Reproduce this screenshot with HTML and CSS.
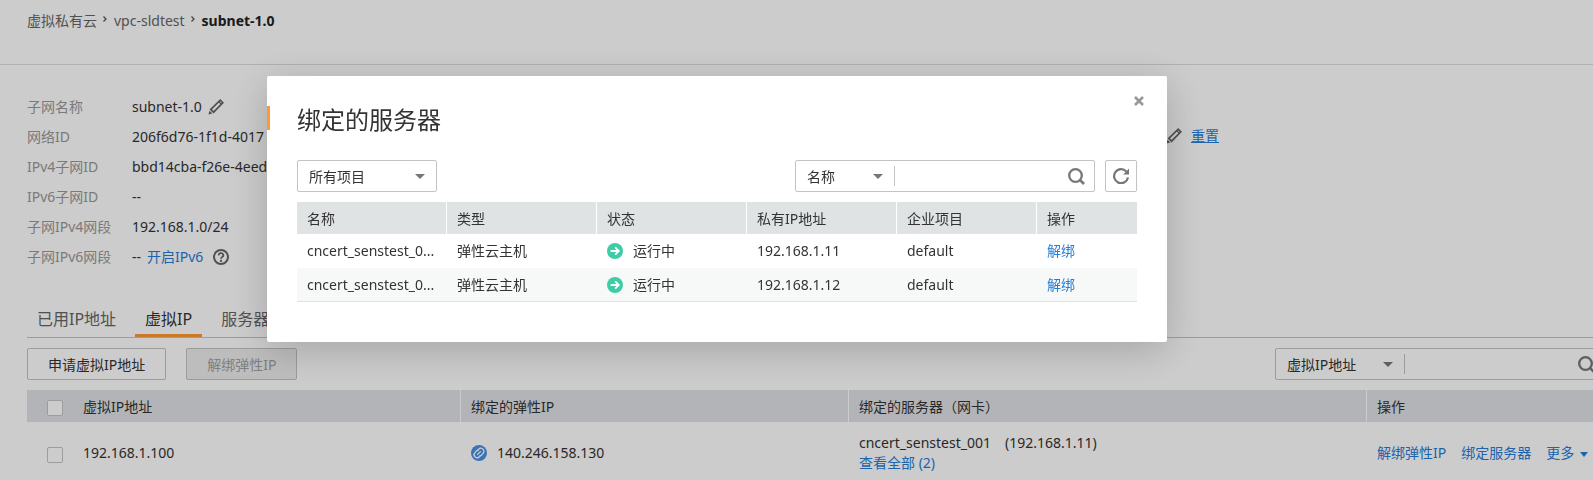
FILE: index.html
```html
<!DOCTYPE html>
<html lang="zh-CN">
<head>
  <meta charset="UTF-8">
  <title>subnet-1.0</title>
  <link rel="stylesheet" href="styles.css">
</head>
<body>
  <svg class="sprite" width="0" height="0">
    <symbol id="pencil" viewBox="0 0 16 16">
      <path d="M0.4 15.6 L1.6 11.8 L4.4 14.6 Z" fill="currentColor"/>
      <path d="M2.8 10.4 L12.2 1.2 L14.8 3.8 L5.6 13.2 Z" fill="none" stroke="currentColor" stroke-width="1.7"/>
      <path d="M10.6 2.6 L13.4 5.4" stroke="currentColor" stroke-width="1.2"/>
    </symbol>
    <symbol id="search" viewBox="0 0 17 17">
      <circle cx="7.5" cy="7.5" r="6.3" fill="none" stroke="currentColor" stroke-width="2.3"/>
      <path d="M11.4 11.4 L16 16" stroke="currentColor" stroke-width="2.6"/>
    </symbol>
    <symbol id="refresh" viewBox="0 0 16 16">
      <path d="M15 9.4 A7 7 0 1 1 13.4 3.6" fill="none" stroke="currentColor" stroke-width="2.2"/>
      <path d="M16 0.6 V6.4 H10.2 Z" fill="currentColor"/>
    </symbol>
    <symbol id="running" viewBox="0 0 16 16">
      <circle cx="8" cy="8" r="8" fill="#3dcca6"/>
      <path d="M3.6 8 H11.6 M8.2 4.4 L11.8 8 L8.2 11.6" fill="none" stroke="#fff" stroke-width="1.8"/>
    </symbol>
    <symbol id="bound" viewBox="0 0 16 16">
      <circle cx="8" cy="8" r="8" fill="#4a90e2"/>
      <g fill="none" stroke="#fff" stroke-width="1.3" stroke-linecap="round">
        <path d="M6.6 9.4 L9.4 6.6"/>
        <path d="M6.2 5.4 L7.6 4.2 A3 3 0 0 1 12 8.4 L10.8 9.8 A2.4 2.4 0 0 1 9 10.6"/>
        <path d="M9.8 10.6 L8.4 11.8 A3 3 0 0 1 4 7.6 L5.2 6.2 A2.4 2.4 0 0 1 7 5.4"/>
      </g>
    </symbol>
  </svg>

  <div class="page">
    <nav class="breadcrumb">
      <a href="#">虚拟私有云</a>
      <svg class="sep" viewBox="0 0 4 6"><path d="M0.5 0.5 L3 3 L0.5 5.5" fill="none" stroke="currentColor" stroke-width="1.3"/></svg>
      <a href="#">vpc-sldtest</a>
      <svg class="sep" viewBox="0 0 4 6"><path d="M0.5 0.5 L3 3 L0.5 5.5" fill="none" stroke="currentColor" stroke-width="1.3"/></svg>
      <strong>subnet-1.0</strong>
    </nav>

    <main class="content">
      <div class="info">
        <dl class="info-list">
          <dt>子网名称</dt>
          <dd>subnet-1.0 <svg class="icon pencil"><use href="#pencil"/></svg></dd>
          <dt>网络ID</dt>
          <dd>206f6d76-1f1d-4017</dd>
          <dt>IPv4子网ID</dt>
          <dd>bbd14cba-f26e-4eed</dd>
          <dt>IPv6子网ID</dt>
          <dd>--</dd>
          <dt>子网IPv4网段</dt>
          <dd>192.168.1.0/24</dd>
          <dt>子网IPv6网段</dt>
          <dd>--<a href="#" class="enable">开启IPv6</a>
            <svg class="help" viewBox="0 0 16 16">
              <circle cx="8" cy="8" r="7" fill="none" stroke="currentColor" stroke-width="2"/>
              <path d="M5.7 6.4 A2.3 2.1 0 1 1 9.2 8 Q8 8.7 8 9.8" fill="none" stroke="currentColor" stroke-width="1.8"/>
              <rect x="7" y="10.8" width="2" height="2" fill="currentColor"/>
            </svg>
          </dd>
        </dl>
        <div class="dns">
          <svg class="icon"><use href="#pencil"/></svg>
          <a href="#">重置</a>
        </div>
      </div>

      <div class="tabs">
        <a href="#" class="tab">已用IP地址</a>
        <a href="#" class="tab active">虚拟IP</a>
        <a href="#" class="tab">服务器</a>
      </div>

      <div class="toolbar">
        <button class="btn">申请虚拟IP地址</button>
        <button class="btn" disabled>解绑弹性IP</button>
        <div class="search-box wide">
          <div class="select">
            <select aria-label="搜索条件"><option>虚拟IP地址</option></select>
          </div>
          <input type="text" aria-label="搜索">
          <svg class="search-icon"><use href="#search"/></svg>
        </div>
      </div>

      <table class="vip-table">
        <thead>
          <tr>
            <th class="col-check"><input type="checkbox" aria-label="全选"></th>
            <th class="col-vip">虚拟IP地址</th>
            <th class="col-eip">绑定的弹性IP</th>
            <th class="col-server">绑定的服务器（网卡）</th>
            <th>操作</th>
          </tr>
        </thead>
        <tbody>
          <tr>
            <td class="col-check"><input type="checkbox" aria-label="192.168.1.100"></td>
            <td>192.168.1.100</td>
            <td><span class="status"><svg class="icon"><use href="#bound"/></svg>140.246.158.130</span></td>
            <td>
              <div class="server"><span>cncert_senstest_001</span><span>(192.168.1.11)</span></div>
              <a href="#">查看全部 (2)</a>
            </td>
            <td>
              <div class="actions">
                <a href="#">解绑弹性IP</a>
                <a href="#">绑定服务器</a>
                <a href="#" class="more">更多</a>
              </div>
            </td>
          </tr>
        </tbody>
      </table>
    </main>
  </div>

  <div class="overlay">
    <div class="modal" role="dialog" aria-labelledby="modalTitle">
      <button class="close" aria-label="关闭">
        <svg viewBox="0 0 10 10"><path d="M1 1 L9 9 M9 1 L1 9" stroke="currentColor" stroke-width="2.6"/></svg>
      </button>
      <h2 id="modalTitle">绑定的服务器</h2>
      <div class="modal-body">
        <div class="filters">
          <div class="select boxed">
            <select aria-label="项目"><option>所有项目</option></select>
          </div>
          <div class="search-box">
            <div class="select">
              <select aria-label="搜索条件"><option>名称</option></select>
            </div>
            <input type="text" aria-label="搜索">
            <svg class="search-icon"><use href="#search"/></svg>
          </div>
          <button class="refresh" aria-label="刷新"><svg class="icon"><use href="#refresh"/></svg></button>
        </div>
        <table class="server-table">
          <colgroup>
            <col class="w-150"><col class="w-150"><col class="w-150"><col class="w-150"><col class="w-140"><col>
          </colgroup>
          <thead>
            <tr><th>名称</th><th>类型</th><th>状态</th><th>私有IP地址</th><th>企业项目</th><th>操作</th></tr>
          </thead>
          <tbody>
            <tr>
              <td>cncert_senstest_0...</td>
              <td>弹性云主机</td>
              <td><span class="status"><svg class="icon"><use href="#running"/></svg>运行中</span></td>
              <td>192.168.1.11</td>
              <td>default</td>
              <td><a href="#">解绑</a></td>
            </tr>
            <tr>
              <td>cncert_senstest_0...</td>
              <td>弹性云主机</td>
              <td><span class="status"><svg class="icon"><use href="#running"/></svg>运行中</span></td>
              <td>192.168.1.12</td>
              <td>default</td>
              <td><a href="#">解绑</a></td>
            </tr>
          </tbody>
        </table>
      </div>
    </div>
  </div>
</body>
</html>
```

FILE: styles.css
```css
* {
  box-sizing: border-box;
}
body {
  margin: 0;
  height: 100vh;
  overflow: hidden;
  background: #fff;
  color: #333;
  font-family: "Noto Sans", "Noto Sans CJK SC", sans-serif;
  font-size: 14px;
  line-height: 20px;
}
a {
  color: #267dd9;
  text-decoration: none;
}
button, select, input {
  font: inherit;
  color: inherit;
}
table {
  width: 100%;
  border-spacing: 0;
  table-layout: fixed;
}
th, td {
  padding: 0 10px;
  text-align: left;
  font-weight: normal;
  white-space: nowrap;
}
th {
  height: 32px;
  padding-top: 2px;
  border-right: 1px solid #fff;
}
th:last-child {
  border-right: 0;
}
.sprite {
  position: absolute;
}
.icon {
  flex: none;
  width: 16px;
  height: 16px;
  color: #666;
}

/* page behind the dialog */
.page {
  min-width: 1640px;
}
.breadcrumb {
  display: flex;
  align-items: center;
  height: 65px;
  padding: 0 27px 23px;
  border-bottom: 1px solid #dcdcdc;
}
.breadcrumb a {
  color: #666;
}
.breadcrumb strong {
  color: #222;
}
.sep {
  width: 4px;
  height: 6px;
  margin: 0 7px 4px 6px;
  color: #555;
}
.content {
  padding: 27px 0 0 27px;
}
.info {
  display: flex;
}
.info-list {
  display: grid;
  grid-template-columns: 105px 1fr;
  grid-auto-rows: 30px;
  align-items: center;
  width: 1139px;
  margin: 0;
}
.info-list dt {
  color: #999;
}
.info-list dd {
  display: flex;
  align-items: center;
  margin: 0;
}
.pencil {
  margin-left: 6px;
}
.enable {
  margin-left: 6px;
}
.help {
  width: 16px;
  height: 16px;
  margin-left: 10px;
  color: #666;
}
.dns {
  display: flex;
  align-items: center;
  gap: 9px;
  height: 30px;
  margin-top: 29px;
}
.dns a {
  text-decoration: underline;
}
.tabs {
  display: flex;
  gap: 9px;
  margin-top: 31px;
  border-bottom: 1px solid #c3c3c3;
}
.tab {
  padding: 6px 10px 4px;
  border-bottom: 3px solid transparent;
  color: #666;
  font-size: 16px;
  line-height: 21px;
}
.tab.active {
  border-color: #ff9933;
  color: #333;
}
.toolbar {
  display: flex;
  gap: 20px;
  padding: 10px 0;
}
.btn {
  height: 32px;
  padding: 2px 20px 0;
  border: 1px solid #c3c3c3;
  border-radius: 2px;
  background: #fff;
}
.btn:disabled {
  border-color: #c3c3c3;
  background: #ededed;
  color: #a0a0a0;
}
.select {
  position: relative;
  flex: none;
}
.select::after {
  content: "";
  position: absolute;
  top: 13px;
  right: 11px;
  border: 5px solid transparent;
  border-top-color: #777;
  border-bottom: 0;
  pointer-events: none;
}
.select select {
  display: block;
  width: 100%;
  height: 30px;
  padding: 2px 11px 0;
  border: 0;
  background: none;
  appearance: none;
}
.select.boxed {
  width: 140px;
  border: 1px solid #c3c3c3;
  border-radius: 2px;
}
.search-box {
  display: flex;
  align-items: center;
  width: 300px;
  height: 32px;
  margin-left: auto;
  border: 1px solid #c3c3c3;
  border-radius: 2px;
}
.search-box .select {
  width: 98px;
}
.search-box input {
  flex: 1;
  min-width: 0;
  height: 20px;
  padding: 0 8px;
  border: 0;
  border-left: 1px solid #c3c3c3;
  background: none;
}
.search-icon {
  width: 17px;
  height: 17px;
  margin-right: 9px;
  color: #777;
}
.search-box.wide {
  width: 330px;
  margin-right: 35px;
}
.search-box.wide .select {
  width: 128px;
}
.vip-table th {
  background: #e0e2e6;
}
.vip-table td {
  height: 62px;
}
.vip-table .col-check {
  width: 46px;
  padding: 0 0 0 20px;
  border: 0;
}
.vip-table .col-vip {
  width: 388px;
}
.vip-table .col-eip {
  width: 388px;
}
.vip-table .col-server {
  width: 518px;
}
input[type="checkbox"] {
  display: block;
  width: 16px;
  height: 16px;
  margin: 3px 0 0;
  border: 1px solid #c3c3c3;
  border-radius: 2px;
  background: #fff;
  appearance: none;
}
.status {
  display: flex;
  align-items: center;
  gap: 10px;
}
.server {
  display: flex;
  gap: 14px;
}
.actions {
  display: flex;
  gap: 15px;
}
.more::after {
  content: "";
  display: inline-block;
  margin: 0 0 1px 6px;
  border: 4px solid transparent;
  border-top: 5px solid #267dd9;
  border-bottom: 0;
}

/* dialog */
.overlay {
  position: fixed;
  inset: 0;
  padding: 76px 0 0 267px;
  background: rgba(0, 0, 0, 0.2);
}
.modal {
  position: relative;
  width: 900px;
  padding: 26px 0 40px;
  border-radius: 2px;
  background: #fff;
  box-shadow: 0 8px 40px rgba(0, 0, 0, 0.2);
}
.modal h2 {
  display: flex;
  align-items: flex-start;
  margin: 0;
  font-size: 24px;
  font-weight: normal;
  line-height: 36px;
}
.modal h2::before {
  content: "";
  width: 3px;
  height: 24px;
  margin: 4px 27px 0 0;
  background: #ff9933;
}
.close {
  position: absolute;
  top: 20px;
  right: 23px;
  width: 10px;
  height: 10px;
  padding: 0;
  border: 0;
  background: none;
  color: #999;
}
.close svg {
  display: block;
}
.modal-body {
  padding: 22px 30px 0;
}
.filters {
  display: flex;
  gap: 10px;
  margin-bottom: 10px;
}
.refresh {
  display: flex;
  align-items: center;
  justify-content: center;
  width: 32px;
  height: 32px;
  padding: 0;
  border: 1px solid #c3c3c3;
  border-radius: 2px;
  background: #fff;
}
.refresh .icon {
  color: #777;
}
.w-150 {
  width: 150px;
}
.w-140 {
  width: 140px;
}
.server-table th {
  background: #dfe3e4;
}
.server-table td {
  height: 34px;
}
.server-table tbody tr:last-child td {
  border-bottom: 1px solid #dfe1e2;
  background: #f7f9f9;
}
```
